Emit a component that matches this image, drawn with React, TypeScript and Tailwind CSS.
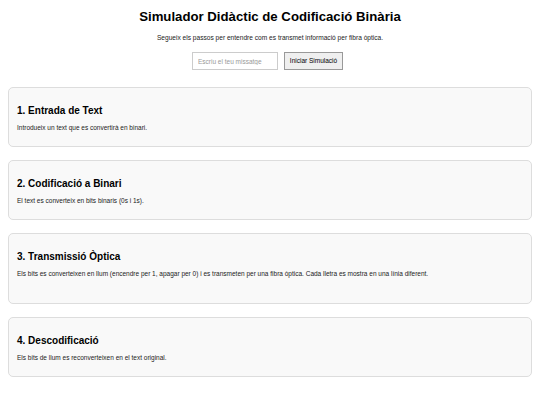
const steps = [
  {
    title: "1. Entrada de Text",
    text: "Introdueix un text que es convertirà en binari.",
  },
  {
    title: "2. Codificació a Binari",
    text: "El text es converteix en bits binaris (0s i 1s).",
  },
  {
    title: "3. Transmissió Òptica",
    text: "Els bits es converteixen en llum (encendre per 1, apagar per 0) i es transmeten per una fibra òptica. Cada lletra es mostra en una línia diferent.",
    output: true,
  },
  {
    title: "4. Descodificació",
    text: "Els bits de llum es reconverteixen en el text original.",
  },
];

export default function App() {
  return (
    <div className="min-h-[405px] bg-white px-[8px] pt-[9px] font-['Liberation_Sans',Arial,sans-serif] text-[#111]">
      <h1 className="text-center text-[13.2px] font-bold leading-[16px] text-black">
        Simulador Didàctic de Codificació Binària
      </h1>
      <p className="mt-[9px] text-center text-[6.6px] leading-[8px] text-[#222]">
        Segueix els passos per entendre com es transmet informació per fibra òptica.
      </p>

      <div className="mt-[10px] flex justify-center gap-[6px] pr-[5px]">
        <input
          type="text"
          placeholder="Escriu el teu missatge"
          className="h-[18px] w-[86px] border border-[#ccc] bg-white px-[5px] text-[6.5px] text-[#333] outline-none placeholder:text-[#999]"
        />
        <button className="h-[18px] w-[59px] border border-[#999] bg-[#efefef] text-[6.5px] text-black">
          Iniciar Simulació
        </button>
      </div>

      <div className="mt-[17px] flex flex-col gap-[13px]">
        {steps.map((s) => (
          <section
            key={s.title}
            className="rounded-[5px] border border-[#ddd] bg-[#f9f9f9] px-[8px] pt-[17px] pb-[14px]"
          >
            <h3 className="text-[10px] font-bold leading-[12px] text-black">{s.title}</h3>
            <p className="mt-[7px] text-[6.5px] leading-[8px] text-[#222]">{s.text}</p>
            {s.output && <div className="h-[11px]" />}
          </section>
        ))}
      </div>
    </div>
  );
}
